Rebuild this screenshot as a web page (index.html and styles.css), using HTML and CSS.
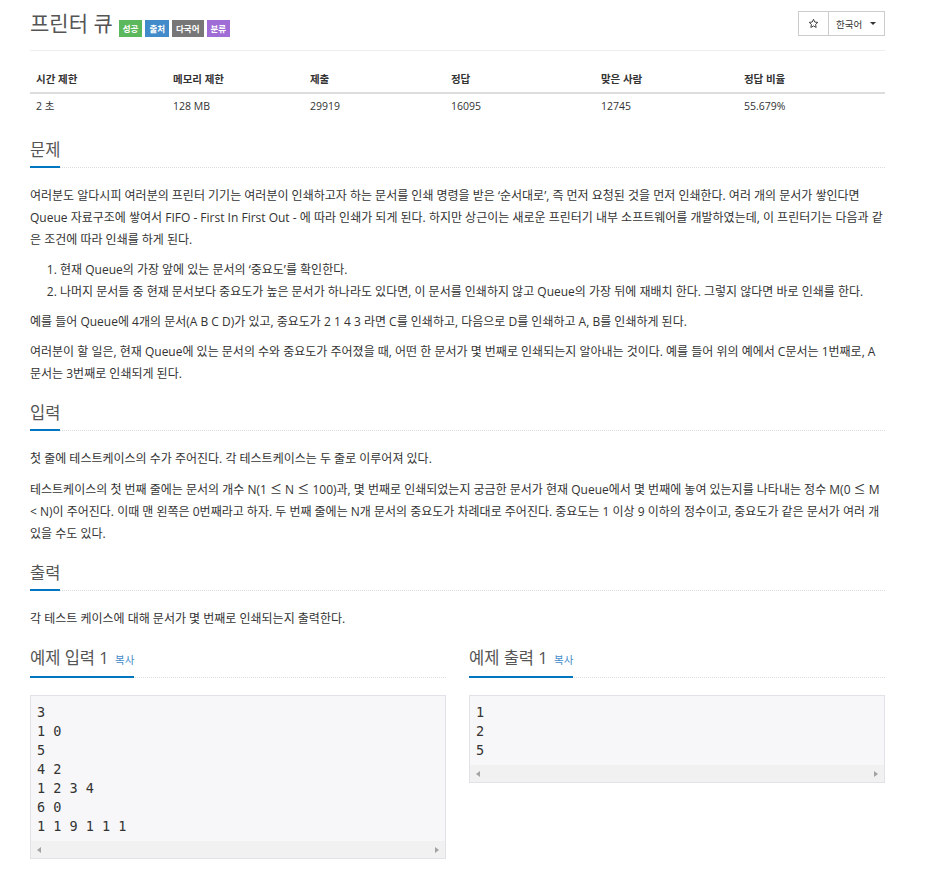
FILE: index.html
```html
<!DOCTYPE html>
<html lang="ko">

<head>
    <meta charset="UTF-8">
    <meta name="viewport" content="width=device-width, initial-scale=1.0">
    <title>프린터 큐</title>
    <link rel="stylesheet" href="styles.css">
</head>

<body>
    <div class="container">
        <div class="page-header">
            <h1>
                <span class="problem-title">프린터 큐</span>
                <span class="label label-green">성공</span>
                <span class="label label-blue">출처</span>
                <span class="label label-gray">다국어</span>
                <span class="label label-purple">분류</span>
            </h1>
            <div class="btn-group">
                <button class="btn btn-star" title="즐겨찾기">
                    <svg width="11" height="11" viewBox="0 0 24 24">
                        <path d="M12 2.8l2.8 6 6.6.8-4.9 4.5 1.3 6.5L12 17.3l-5.8 3.3 1.3-6.5-4.9-4.5 6.6-.8z" fill="none" stroke="#333" stroke-width="2" stroke-linejoin="round"/>
                    </svg>
                </button>
                <button class="btn btn-lang">한국어 <span class="caret"></span></button>
            </div>
        </div>

        <table class="info-table">
            <colgroup>
                <col class="col-time">
                <col class="col-memory">
                <col class="col-submit">
                <col class="col-accepted">
                <col class="col-solved">
                <col class="col-ratio">
            </colgroup>
            <thead>
                <tr>
                    <th>시간 제한</th>
                    <th>메모리 제한</th>
                    <th>제출</th>
                    <th>정답</th>
                    <th>맞은 사람</th>
                    <th>정답 비율</th>
                </tr>
            </thead>
            <tbody>
                <tr>
                    <td>2 초</td>
                    <td>128 MB</td>
                    <td>29919</td>
                    <td>16095</td>
                    <td>12745</td>
                    <td>55.679%</td>
                </tr>
            </tbody>
        </table>

        <section class="problem-section first">
            <div class="headline">
                <h2><span>문제</span></h2>
            </div>
            <div class="problem-text">
                <p>여러분도 알다시피 여러분의 프린터 기기는 여러분이 인쇄하고자 하는 문서를 인쇄 명령을 받은 ‘순서대로’, 즉 먼저 요청된 것을 먼저 인쇄한다. 여러 개의 문서가 쌓인다면 Queue 자료구조에 쌓여서 FIFO - First In First Out - 에 따라 인쇄가 되게 된다. 하지만 상근이는 새로운 프린터기 내부 소프트웨어를 개발하였는데, 이 프린터기는 다음과 같은 조건에 따라 인쇄를 하게 된다.</p>
                <ol>
                    <li>현재 Queue의 가장 앞에 있는 문서의 ‘중요도’를 확인한다.</li>
                    <li>나머지 문서들 중 현재 문서보다 중요도가 높은 문서가 하나라도 있다면, 이 문서를 인쇄하지 않고 Queue의 가장 뒤에 재배치 한다. 그렇지 않다면 바로 인쇄를 한다.</li>
                </ol>
                <p>예를 들어 Queue에 4개의 문서(A B C D)가 있고, 중요도가 2 1 4 3 라면 C를 인쇄하고, 다음으로 D를 인쇄하고 A, B를 인쇄하게 된다.</p>
                <p>여러분이 할 일은, 현재 Queue에 있는 문서의 수와 중요도가 주어졌을 때, 어떤 한 문서가 몇 번째로 인쇄되는지 알아내는 것이다. 예를 들어 위의 예에서 C문서는 1번째로, A 문서는 3번째로 인쇄되게 된다.</p>
            </div>
        </section>

        <section class="problem-section">
            <div class="headline">
                <h2><span>입력</span></h2>
            </div>
            <div class="problem-text">
                <p>첫 줄에 테스트케이스의 수가 주어진다. 각 테스트케이스는 두 줄로 이루어져 있다.</p>
                <p>테스트케이스의 첫 번째 줄에는 문서의 개수 N(1 <span class="sym">≤</span> N <span class="sym">≤</span> 100)과, 몇 번째로 인쇄되었는지 궁금한 문서가 현재 Queue에서 몇 번째에 놓여 있는지를 나타내는 정수 M(0 <span class="sym">≤</span> M &lt; N)이 주어진다. 이때 맨 왼쪽은 0번째라고 하자. 두 번째 줄에는 N개 문서의 중요도가 차례대로 주어진다. 중요도는 1 이상 9 이하의 정수이고, 중요도가 같은 문서가 여러 개 있을 수도 있다.</p>
            </div>
        </section>

        <section class="problem-section">
            <div class="headline">
                <h2><span>출력</span></h2>
            </div>
            <div class="problem-text">
                <p>각 테스트 케이스에 대해 문서가 몇 번째로 인쇄되는지 출력한다.</p>
            </div>
        </section>

        <div class="samples">
            <section class="problem-section">
                <div class="headline">
                    <h2><span>예제 입력 1 <a class="copy-button">복사</a></span></h2>
                </div>
                <div class="sample-box">
                    <pre class="sampledata">3
1 0
5
4 2
1 2 3 4
6 0
1 1 9 1 1 1</pre>
                    <div class="scrollbar"><span class="arrow-left"></span><span class="arrow-right"></span></div>
                </div>
            </section>
            <section class="problem-section">
                <div class="headline">
                    <h2><span>예제 출력 1 <a class="copy-button">복사</a></span></h2>
                </div>
                <div class="sample-box">
                    <pre class="sampledata">1
2
5</pre>
                    <div class="scrollbar"><span class="arrow-left"></span><span class="arrow-right"></span></div>
                </div>
            </section>
        </div>
    </div>
</body>

</html>
```

FILE: styles.css
```css
body {
    margin: 0;
    font-family: "Open Sans", "Noto Sans CJK KR", sans-serif;
    font-size: 12px;
    color: #333;
    background: #fff;
}

.container {
    width: 855px;
    padding: 0 30px;
}

/* title bar */

.page-header {
    display: flex;
    justify-content: space-between;
    align-items: flex-start;
    padding-bottom: 13px;
    border-bottom: 1px solid #eee;
}

.page-header h1 {
    display: flex;
    align-items: flex-end;
    margin: 9px 0 0;
    font-size: 21px;
    line-height: 28px;
    font-weight: 400;
    color: #555;
}

.problem-title {
    margin-right: 3px;
}

.label {
    display: inline-block;
    height: 17px;
    line-height: 17px;
    padding: 0 4px;
    margin-left: 3px;
    font-size: 8.5px;
    font-weight: 700;
    color: #fff;
}

.label-green {
    background-color: #5cb85c;
}

.label-blue {
    background-color: #428bca;
}

.label-gray {
    background-color: #777;
}

.label-purple {
    background-color: #a06cd5;
}

.btn-group {
    display: flex;
    margin-top: 11px;
}

.btn {
    display: flex;
    align-items: center;
    box-sizing: border-box;
    height: 25px;
    padding: 0 6px;
    border: 1px solid #ccc;
    background: #fff;
    font-family: inherit;
    font-size: 9.5px;
    color: #333;
}

.btn-star {
    width: 31px;
    justify-content: center;
}

.btn-lang {
    width: 57px;
    margin-left: -1px;
    padding-left: 7px;
    gap: 8px;
}

.caret {
    width: 0;
    height: 0;
    border-top: 3px solid #333;
    border-left: 3px solid transparent;
    border-right: 3px solid transparent;
}

/* limits table */

.info-table {
    width: 100%;
    table-layout: fixed;
    border-collapse: collapse;
    margin-top: 16px;
    font-size: 10.5px;
}

.info-table th,
.info-table td {
    padding: 5px 6px;
    line-height: 15px;
    text-align: left;
}

.info-table th {
    font-weight: 700;
    border-bottom: 2px solid #ddd;
}

.col-time,
.col-memory {
    width: 16.02%;
}

.col-submit {
    width: 16.49%;
}

.col-accepted {
    width: 17.54%;
}

.col-solved {
    width: 16.73%;
}

/* sections */

.problem-section {
    margin-top: 17px;
}

.problem-section.first {
    margin-top: 20px;
}

.headline h2 {
    margin: 0 0 17px;
    font-size: 16.5px;
    line-height: 22px;
    font-weight: 400;
    color: #555;
    border-bottom: 1px dotted #ddd;
}

.headline h2 span {
    display: inline-block;
    padding-bottom: 5px;
    margin-bottom: -1px;
    border-bottom: 2px solid #0076c0;
}

.copy-button {
    margin-left: 2px;
    font-size: 10.5px;
    color: #428bca;
}

.problem-text p {
    margin: 0 0 8px;
    line-height: 22px;
}

.problem-text ol {
    margin: 0 0 8px;
    padding-left: 30px;
    line-height: 22px;
}

.sym {
    font-family: "Noto Sans CJK KR", sans-serif;
}

/* samples */

.samples {
    display: grid;
    grid-template-columns: 1fr 1fr;
    gap: 23px;
    margin-top: 17px;
}

.samples .problem-section {
    margin-top: 0;
}

.sample-box {
    border: 1px solid #e1e1e8;
    background: #f7f7f9;
}

.sampledata {
    margin: 0;
    padding: 7px 6px 5px;
    font-family: "DejaVu Sans Mono", monospace;
    font-size: 13.5px;
    line-height: 19px;
    color: #333;
}

.scrollbar {
    display: flex;
    justify-content: space-between;
    align-items: center;
    height: 17px;
    padding: 0 6px;
    background: #f1f1f1;
}

.arrow-left,
.arrow-right {
    width: 0;
    height: 0;
    border-top: 3.5px solid transparent;
    border-bottom: 3.5px solid transparent;
}

.arrow-left {
    border-right: 4px solid #a3a3a3;
}

.arrow-right {
    border-left: 4px solid #a3a3a3;
}
```
